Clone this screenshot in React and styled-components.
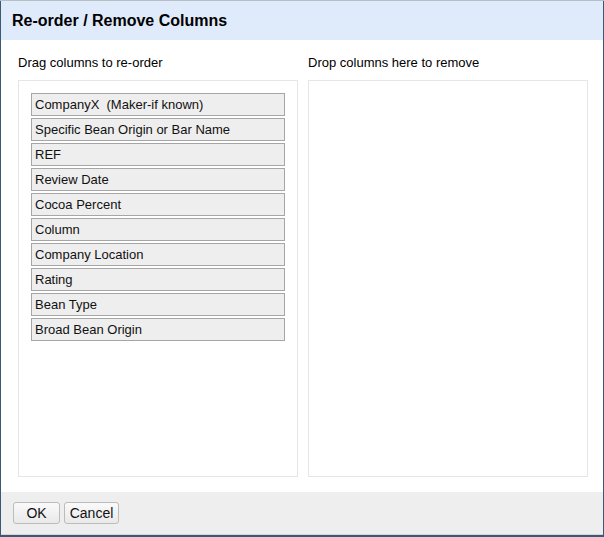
import React from "react";
import styled, { createGlobalStyle } from "styled-components";

const GlobalStyle = createGlobalStyle`
  html, body {
    margin: 0;
    padding: 0;
    background: #b8bfc6;
  }
  body {
    font-family: "Liberation Sans", Arial, sans-serif;
    color: #000;
  }
`;

const Dialog = styled.div`
  margin-top: 1px;
  width: 604px;
  height: 536px;
  box-sizing: border-box;
  display: flex;
  flex-direction: column;
  background: #fff;
  border-left: 1px solid #3d5874;
  border-right: 1px solid #3d5874;
  border-bottom: 2px solid #3d5874;
`;

const Header = styled.div`
  height: 39px;
  flex: none;
  display: flex;
  align-items: center;
  padding-left: 11px;
  background: #dfebfb;
  font-size: 16px;
  font-weight: 700;
`;

const Body = styled.div`
  flex: 1;
  display: grid;
  grid-template-columns: 280px 280px;
  column-gap: 10px;
  padding: 15px 0 15px 17px;
`;

const Column = styled.div`
  display: flex;
  flex-direction: column;
`;

const Label = styled.div`
  font-size: 13px;
  line-height: 16px;
  margin-bottom: 9px;
`;

const Panel = styled.div`
  flex: 1;
  box-sizing: border-box;
  border: 1px solid #e6e6e6;
  padding: 12px;
  display: flex;
  flex-direction: column;
  gap: 2px;
`;

const Item = styled.div`
  height: 23px;
  box-sizing: border-box;
  border: 1px solid #a6a6a6;
  background: #eeeeee;
  font-size: 13px;
  line-height: 21px;
  padding-left: 3px;
  color: #111;
`;

const Footer = styled.div`
  height: 43px;
  flex: none;
  box-sizing: border-box;
  background: #eeeeee;
  border-bottom: 1px solid #d4d8dc;
  display: flex;
  align-items: flex-start;
  gap: 4px;
  padding: 10px 0 0 12px;
`;

const Button = styled.button`
  height: 22px;
  width: ${(p) => p.$w}px;
  padding: 0;
  box-sizing: border-box;
  border: 1px solid #bcbcbc;
  border-radius: 3px;
  background: linear-gradient(#fafafa, #e9e9e9);
  font-family: "Liberation Sans", Arial, sans-serif;
  font-size: 14px;
  color: #111;
`;

const columns = [
  "CompanyX\u00a0 (Maker-if known)",
  "Specific Bean Origin or Bar Name",
  "REF",
  "Review Date",
  "Cocoa Percent",
  "Column",
  "Company Location",
  "Rating",
  "Bean Type",
  "Broad Bean Origin",
];

const App = () => (
  <>
    <GlobalStyle />
    <Dialog>
      <Header>Re-order / Remove Columns</Header>
      <Body>
        <Column>
          <Label>Drag columns to re-order</Label>
          <Panel>
            {columns.map((c) => (
              <Item key={c}>{c}</Item>
            ))}
          </Panel>
        </Column>
        <Column>
          <Label>Drop columns here to remove</Label>
          <Panel />
        </Column>
      </Body>
      <Footer>
        <Button $w={47}>OK</Button>
        <Button $w={55}>Cancel</Button>
      </Footer>
    </Dialog>
  </>
);

export default App;
